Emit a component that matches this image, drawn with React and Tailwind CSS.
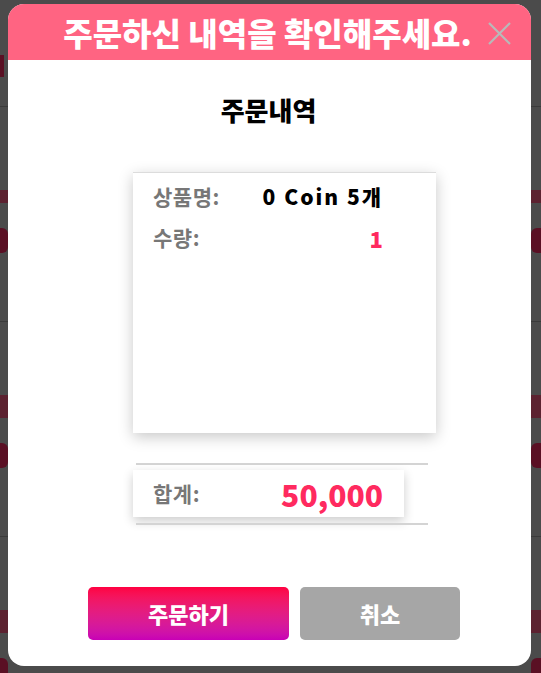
import React from 'react';

const font = { fontFamily: '"Noto Sans CJK KR", "Noto Sans", sans-serif' };

function BgRow({ first }) {
  // what is left visible of the page behind the dimmed overlay
  return (
    <div className="h-[215px] border-b border-[#3a3a3a] flex justify-between">
      <div className="flex flex-col">
        <div className={first ? 'mt-[83px] h-[13px] w-[8px] bg-[#5c2230]' : 'mt-[73px] h-[23px] w-[8px] bg-[#5c2230]'} />
        <div className="mt-[25px] h-[25px] w-[8px] rounded-r-md bg-[#5a1024]" />
      </div>
      <div className="flex flex-col items-end">
        <div className={first ? 'mt-[83px] h-[13px] w-[10px] bg-[#5c2230]' : 'mt-[73px] h-[23px] w-[10px] bg-[#5c2230]'} />
        <div className="mt-[25px] h-[25px] w-[10px] rounded-l-md bg-[#5a1024]" />
      </div>
    </div>
  );
}

function App() {
  return (
    <div className="relative h-[673px] w-[541px] overflow-hidden bg-[#4b4b4b]" style={font}>
      {/* page behind */}
      <div className="h-[107px] pt-[55px] border-b border-[#3a3a3a]">
        <div className="h-[22px] w-[4px] bg-[#5a1024]" />
      </div>
      <BgRow first />
      <BgRow />
      <BgRow />

      {/* modal overlay */}
      <div className="absolute inset-0 pt-[4px] pl-[8px]">
        <div className="w-[523px] h-[662px] bg-white rounded-[16px] overflow-hidden flex flex-col">
          <div className="relative h-[56px] bg-[#ff6482] flex items-center justify-center shrink-0">
            <h2 className="text-[32px] font-black text-white -ml-[4px] leading-none">
              주문하신 내역을 확인해주세요.
            </h2>
            <button className="absolute right-[20px] top-[17px] w-[24px] h-[24px] flex items-center justify-center">
              <svg width="23" height="23" viewBox="0 0 23 23" fill="none" stroke="#b9b9b9" strokeWidth="2.2">
                <path d="M1 1L22 22M22 1L1 22" />
              </svg>
            </button>
          </div>

          <div className="flex-1 flex flex-col">
            <h3 className="pt-[31px] text-center text-[26px] font-black text-black leading-[37px] -ml-[2px]">주문내역</h3>

            <div className="mt-[44px] ml-[125px] w-[303px] h-[261px] bg-white border-t border-[#dcdcdc] shadow-[0_4px_14px_rgba(0,0,0,0.22)] pt-[9px] pl-[20px]">
              <div className="flex items-center h-[30px]">
                <span className="w-[100px] text-[21px] font-bold text-[#777777] tracking-[0.5px]">상품명:</span>
                <span className="w-[130px] text-right text-[21px] font-black text-black tracking-[2px] whitespace-nowrap">0 Coin 5개</span>
              </div>
              <div className="flex items-center h-[30px] mt-[11px]">
                <span className="w-[100px] text-[21px] font-bold text-[#777777] tracking-[0.5px]">수량:</span>
                <span className="w-[130px] text-right text-[22px] font-black text-[#ff2a5f]">1</span>
              </div>
            </div>

            <div className="mt-[30px] ml-[125px] w-[303px]">
              <div className="ml-[3px] w-[292px] border-t-2 border-[#d4d4d4]" />
              <div className="mt-[5px] w-[271px] h-[47px] bg-white shadow-[0_4px_10px_rgba(0,0,0,0.2)] flex items-center pl-[20px]">
                <span className="w-[126px] text-[21px] font-bold text-[#777777] tracking-[0.5px]">합계:</span>
                <span className="w-[104px] text-right text-[30px] font-black text-[#ff2a5f] leading-none whitespace-nowrap">50,000</span>
              </div>
              <div className="mt-[6px] ml-[3px] w-[292px] border-t-2 border-[#d4d4d4]" />
            </div>

            <div className="mt-[62px] ml-[80px] flex gap-[11px]">
              <button className="w-[201px] h-[53px] rounded-[5px] bg-gradient-to-b from-[#ff0040] to-[#c800b6] text-white text-[22px] font-black">
                주문하기
              </button>
              <button className="w-[160px] h-[53px] rounded-[5px] bg-[#a6a6a6] text-white text-[22px] font-black">
                취소
              </button>
            </div>
          </div>
        </div>
      </div>
    </div>
  );
}

export default App;
